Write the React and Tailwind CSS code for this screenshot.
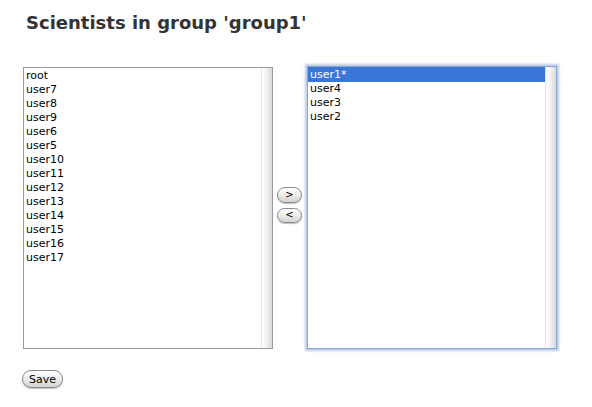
export default function App() {
  const left = ["root","user7","user8","user9","user6","user5","user10","user11","user12","user13","user14","user15","user16","user17"];
  const right = ["user1*","user4","user3","user2"];
  const btn = "flex items-center justify-center rounded-full border border-[#8a8a8a] bg-gradient-to-b from-[#ffffff] via-[#ececec] to-[#d4d4d4] text-black shadow-[0_1px_1px_rgba(0,0,0,0.25)]";
  return (
    <div className="w-[592px] h-[407px] bg-white overflow-hidden font-['DejaVu_Sans',sans-serif]">
      <h1 className="pl-[26px] pt-[11px] text-[18px] font-bold text-[#333333] leading-[24px]">Scientists in group 'group1'</h1>
      <div className="flex items-center mt-[31px] ml-[23px]">
        <div className="relative w-[250px] h-[282px] border border-[#9a9a9a] bg-white">
          <div className="pl-[2px] pt-[1px]">
            {left.map((n) => (
              <div key={n} className="h-[14px] leading-[14px] text-[11px] text-black">{n}</div>
            ))}
          </div>
          <div className="absolute right-0 top-0 bottom-0 w-[11px] bg-gradient-to-r from-[#ffffff] via-[#f0f0f0] to-[#d9d9d9] border-l border-[#e4e4e4]" />
        </div>
        <div className="flex flex-col gap-[5px] ml-[4px] mt-[-6px]">
          <button className={`${btn} w-[25px] h-[16px] text-[10px] leading-none`}>&gt;</button>
          <button className={`${btn} w-[25px] h-[15px] text-[10px] leading-none`}>&lt;</button>
        </div>
        <div className="relative ml-[5px] w-[250px] h-[283px] border border-[#8fa7c7] bg-white shadow-[0_0_2px_2px_rgba(125,160,210,0.55)]">
          <div>
            {right.map((n, i) => (
              <div key={n} className={`text-[11px] pl-[2px] ${i === 0 ? "bg-[#3a76d6] text-white h-[15px] leading-[15px]" : "h-[14px] leading-[14px] text-black"}`}>{n}</div>
            ))}
          </div>
          <div className="absolute right-0 top-0 bottom-0 w-[11px] bg-gradient-to-r from-[#ffffff] via-[#f0f0f0] to-[#d9d9d9] border-l border-[#e4e4e4]" />
        </div>
      </div>
      <div className="ml-[22px] mt-[21px]">
        <button className={`${btn} w-[41px] h-[18px] text-[11px] leading-none`}>Save</button>
      </div>
    </div>
  );
}
